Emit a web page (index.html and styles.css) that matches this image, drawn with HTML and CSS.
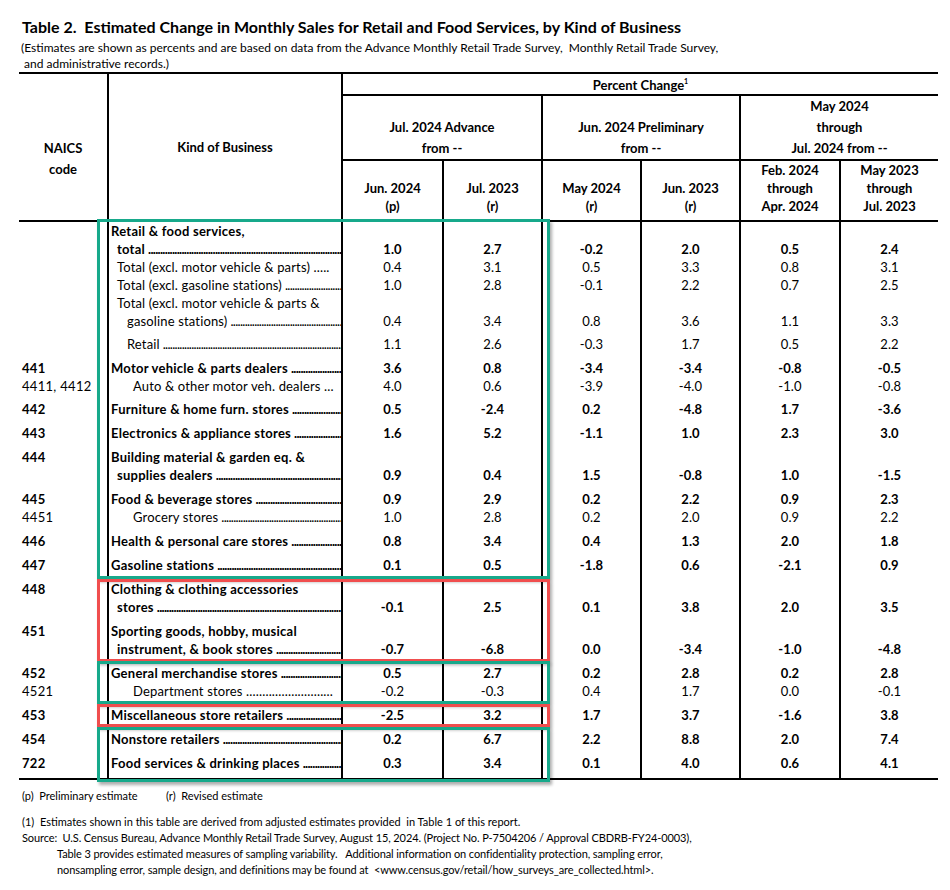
FILE: index.html
```html
<!DOCTYPE html>
<html lang="en">
<head>
<meta charset="utf-8">
<title>Table 2. Estimated Change in Monthly Sales</title>
<link rel="stylesheet" href="styles.css">
</head>
<body>
<div class="page">
  <h1 class="title">Table 2.&nbsp; Estimated Change in Monthly Sales for Retail and Food Services, by Kind of Business</h1>
  <p class="subtitle">(Estimates are shown as percents and are based on data from the Advance Monthly Retail Trade Survey,&nbsp; Monthly Retail Trade Survey,<br>&nbsp;and administrative records.)</p>

  <div class="table-wrap">
    <table class="data">
      <colgroup>
        <col class="c-naics"><col class="c-kind"><col class="c-v1"><col class="c-v2"><col class="c-v3"><col class="c-v4"><col class="c-v5"><col class="c-v6">
      </colgroup>
      <thead>
        <tr class="h1">
          <th rowspan="3" class="naics-h">NAICS<br>code</th>
          <th rowspan="3" class="kind-h">Kind of Business</th>
          <th colspan="6" class="pc">Percent Change<sup>1</sup></th>
        </tr>
        <tr class="h2">
          <th colspan="2">Jul. 2024 Advance<br>from --</th>
          <th colspan="2">Jun. 2024 Preliminary<br>from --</th>
          <th colspan="2">May 2024<br>through<br>Jul. 2024 from --</th>
        </tr>
        <tr class="h3">
          <th>Jun. 2024<br>(p)</th>
          <th>Jul. 2023<br>(r)</th>
          <th>May 2024<br>(r)</th>
          <th>Jun. 2023<br>(r)</th>
          <th>Feb. 2024<br>through<br>Apr. 2024</th>
          <th>May 2023<br>through<br>Jul. 2023</th>
        </tr>
      </thead>
      <tbody>
        <tr class="b"><td></td><td><div class="lbl">Retail &amp; food services,</div></td><td></td><td></td><td></td><td></td><td></td><td></td></tr>
        <tr class="b"><td></td><td><div class="lbl i1"><span>total</span><span class="dots"></span></div></td><td>1.0</td><td>2.7</td><td>-0.2</td><td>2.0</td><td>0.5</td><td>2.4</td></tr>
        <tr><td></td><td><div class="lbl i1">Total (excl. motor vehicle &amp; parts) .....</div></td><td>0.4</td><td>3.1</td><td>0.5</td><td>3.3</td><td>0.8</td><td>3.1</td></tr>
        <tr><td></td><td><div class="lbl i1"><span>Total (excl. gasoline stations)</span><span class="dots"></span></div></td><td>1.0</td><td>2.8</td><td>-0.1</td><td>2.2</td><td>0.7</td><td>2.5</td></tr>
        <tr><td></td><td><div class="lbl i1">Total (excl. motor vehicle &amp; parts &amp;</div></td><td></td><td></td><td></td><td></td><td></td><td></td></tr>
        <tr><td></td><td><div class="lbl i2"><span>gasoline stations)</span><span class="dots"></span></div></td><td>0.4</td><td>3.4</td><td>0.8</td><td>3.6</td><td>1.1</td><td>3.3</td></tr>
        <tr class="g5"><td></td><td><div class="lbl i2"><span>Retail</span><span class="dots"></span></div></td><td>1.1</td><td>2.6</td><td>-0.3</td><td>1.7</td><td>0.5</td><td>2.2</td></tr>

        <tr class="b g6"><td>441</td><td><div class="lbl"><span>Motor vehicle &amp; parts dealers</span><span class="dots"></span></div></td><td>3.6</td><td>0.8</td><td>-3.4</td><td>-3.4</td><td>-0.8</td><td>-0.5</td></tr>
        <tr><td>4411, 4412</td><td><div class="lbl i3">Auto &amp; other motor veh. dealers ...</div></td><td>4.0</td><td>0.6</td><td>-3.9</td><td>-4.0</td><td>-1.0</td><td>-0.8</td></tr>

        <tr class="b g5"><td>442</td><td><div class="lbl"><span>Furniture &amp; home furn. stores</span><span class="dots"></span></div></td><td>0.5</td><td>-2.4</td><td>0.2</td><td>-4.8</td><td>1.7</td><td>-3.6</td></tr>
        <tr class="b g6"><td>443</td><td><div class="lbl"><span>Electronics &amp; appliance stores</span><span class="dots"></span></div></td><td>1.6</td><td>5.2</td><td>-1.1</td><td>1.0</td><td>2.3</td><td>3.0</td></tr>
        <tr class="b g6"><td>444</td><td><div class="lbl">Building material &amp; garden eq. &amp;</div></td><td></td><td></td><td></td><td></td><td></td><td></td></tr>
        <tr class="b"><td></td><td><div class="lbl i1"><span>supplies dealers</span><span class="dots"></span></div></td><td>0.9</td><td>0.4</td><td>1.5</td><td>-0.8</td><td>1.0</td><td>-1.5</td></tr>
        <tr class="b g6"><td>445</td><td><div class="lbl"><span>Food &amp; beverage stores</span><span class="dots"></span></div></td><td>0.9</td><td>2.9</td><td>0.2</td><td>2.2</td><td>0.9</td><td>2.3</td></tr>
        <tr><td>4451</td><td><div class="lbl i3"><span>Grocery stores</span><span class="dots"></span></div></td><td>1.0</td><td>2.8</td><td>0.2</td><td>2.0</td><td>0.9</td><td>2.2</td></tr>
        <tr class="b g6"><td>446</td><td><div class="lbl"><span>Health &amp; personal care stores</span><span class="dots"></span></div></td><td>0.8</td><td>3.4</td><td>0.4</td><td>1.3</td><td>2.0</td><td>1.8</td></tr>
        <tr class="b g6"><td>447</td><td><div class="lbl"><span>Gasoline stations</span><span class="dots"></span></div></td><td>0.1</td><td>0.5</td><td>-1.8</td><td>0.6</td><td>-2.1</td><td>0.9</td></tr>
        <tr class="b g6"><td>448</td><td><div class="lbl">Clothing &amp; clothing accessories</div></td><td></td><td></td><td></td><td></td><td></td><td></td></tr>
        <tr class="b"><td></td><td><div class="lbl i1"><span>stores</span><span class="dots"></span></div></td><td>-0.1</td><td>2.5</td><td>0.1</td><td>3.8</td><td>2.0</td><td>3.5</td></tr>
        <tr class="b g6"><td>451</td><td><div class="lbl">Sporting goods, hobby, musical</div></td><td></td><td></td><td></td><td></td><td></td><td></td></tr>
        <tr class="b"><td></td><td><div class="lbl i1"><span>instrument, &amp; book stores</span><span class="dots"></span></div></td><td>-0.7</td><td>-6.8</td><td>0.0</td><td>-3.4</td><td>-1.0</td><td>-4.8</td></tr>
        <tr class="b g6"><td>452</td><td><div class="lbl"><span>General merchandise stores</span><span class="dots"></span></div></td><td>0.5</td><td>2.7</td><td>0.2</td><td>2.8</td><td>0.2</td><td>2.8</td></tr>
        <tr><td>4521</td><td><div class="lbl i3">Department stores ...........................</div></td><td>-0.2</td><td>-0.3</td><td>0.4</td><td>1.7</td><td>0.0</td><td>-0.1</td></tr>
        <tr class="b g6"><td>453</td><td><div class="lbl"><span>Miscellaneous store retailers</span><span class="dots"></span></div></td><td>-2.5</td><td>3.2</td><td>1.7</td><td>3.7</td><td>-1.6</td><td>3.8</td></tr>
        <tr class="b g6"><td>454</td><td><div class="lbl"><span>Nonstore retailers</span><span class="dots"></span></div></td><td>0.2</td><td>6.7</td><td>2.2</td><td>8.8</td><td>2.0</td><td>7.4</td></tr>
        <tr class="b g6 last"><td>722</td><td><div class="lbl"><span>Food services &amp; drinking places</span><span class="dots"></span></div></td><td>0.3</td><td>3.4</td><td>0.1</td><td>4.0</td><td>0.6</td><td>4.1</td></tr>
      </tbody>
    </table>

    <div class="mark green m1"></div>
    <div class="mark red m2"></div>
    <div class="mark green m3"></div>
    <div class="mark red m4"></div>
    <div class="mark green m5"></div>
  </div>

  <div class="notes">
    <p class="legend"><span class="leg-p">(p)&nbsp; Preliminary estimate</span><span>(r)&nbsp; Revised estimate</span></p>
    <p class="fn">(1)&nbsp; Estimates shown in this table are derived from adjusted estimates provided&nbsp; in Table 1 of this report.</p>
    <p class="source">Source:&nbsp; U.S. Census Bureau, Advance Monthly Retail Trade Survey, August 15, 2024. (Project No. P-7504206 / Approval CBDRB-FY24-0003),<br>Table 3 provides estimated measures of sampling variability.&nbsp;&nbsp; Additional information on confidentiality protection, sampling error,<br>nonsampling error, sample design, and definitions may be found at&nbsp; &lt;www.census.gov/retail/how_surveys_are_collected.html&gt;.</p>
  </div>
</div>
</body>
</html>
```

FILE: styles.css
```css
html, body {
  margin: 0;
  padding: 0;
  background: #ffffff;
}

body {
  font-family: Lato, "Open Sans", "Liberation Sans", sans-serif;
  color: #000000;
}

.page {
  padding: 16px 0 0 19px;
  width: 919px;
}

.title {
  margin: 0 0 2px 3px;
  font-size: 16px;
  line-height: 22px;
  font-weight: 700;
  white-space: nowrap;
}

.subtitle {
  margin: 0 0 0 2px;
  font-size: 12px;
  line-height: 16px;
  white-space: nowrap;
}

.table-wrap {
  position: relative;
}

.data {
  width: 919px;
  table-layout: fixed;
  border-collapse: collapse;
  font-size: 13px;
  letter-spacing: 0.15px;
}

.c-naics { width: 89px; }
.c-kind { width: 234px; }
.c-v1 { width: 101px; }
.c-v2 { width: 99px; }
.c-v3 { width: 99px; }
.c-v4 { width: 99px; }
.c-v5 { width: 100px; }
.c-v6 { width: 98px; }

.data th {
  font-weight: 700;
  text-align: center;
  padding: 0;
  border-left: 2px solid #000;
  letter-spacing: 0;
}

.data thead tr.h1 th {
  border-top: 2px solid #000;
}

.data th.naics-h {
  border-left: none;
  border-bottom: 2px solid #000;
  vertical-align: middle;
  padding-top: 24px;
  line-height: 21px;
}

.data th.kind-h {
  border-bottom: 2px solid #000;
  vertical-align: middle;
  line-height: 18px;
}

.data th.pc {
  height: 17px;
  padding-top: 2px;
  line-height: 18px;
  border-bottom: 2px solid #000;
  vertical-align: middle;
}

.data th.pc sup {
  font-size: 7px;
  vertical-align: 6px;
  line-height: 0;
}

.data tr.h2 th {
  height: 62px;
  line-height: 21px;
  vertical-align: bottom;
  border-bottom: 2px solid #000;
}

.data tr.h3 th {
  height: 54px;
  line-height: 18px;
  padding-bottom: 5px;
  vertical-align: bottom;
  border-bottom: 2px solid #000;
}

.data tr.h2 th:first-child {
  border-left: 2px solid #000;
}

.data td {
  padding: 0;
  height: 18px;
  line-height: 18px;
  text-align: center;
  vertical-align: bottom;
  border-left: 2px solid #000;
  white-space: nowrap;
}

.data td:first-child {
  border-left: none;
  text-align: left;
  padding-left: 3px;
  letter-spacing: 0.3px;
}

.data td:nth-child(2) {
  text-align: left;
  padding-left: 2px;
}

.data tr.b td {
  font-weight: 700;
}

.data tr.b td:nth-child(2) {
  letter-spacing: 0.25px;
}

.data tr.g4 td { padding-top: 4px; }
.data tr.g5 td { padding-top: 5px; }
.data tr.g6 td { padding-top: 6px; }
.data tr.last td { padding-bottom: 6px; border-bottom: 2px solid #000; }

.lbl {
  display: flex;
  overflow: hidden;
  white-space: nowrap;
}

.lbl.i1 { padding-left: 6px; }
.lbl.i2 { padding-left: 16px; }
.lbl.i3 { padding-left: 22px; }

.lbl .dots {
  flex: 1 1 auto;
  overflow: hidden;
  padding-left: 3px;
  letter-spacing: -0.7px;
}

.lbl .dots::after {
  content: "....................................................................................................................................................";
}

.mark {
  position: absolute;
  left: 78px;
  width: 453px;
  box-sizing: border-box;
  border: 3px solid;
  box-shadow: 2px 3px 3px rgba(0, 0, 0, 0.32);
  pointer-events: none;
}

.mark.green { border-color: #17a98b; }
.mark.red { border-color: #f04e4e; }

.m1 { top: 147px; height: 360px; }
.m2 { top: 507px; height: 83px; }
.m3 { top: 589px; height: 43px; }
.m4 { top: 632px; height: 23px; }
.m5 { top: 655px; height: 55px; }

.notes {
  margin: 0 0 0 3px;
  font-size: 11px;
  line-height: 16px;
}

.notes p {
  margin: 0;
  white-space: nowrap;
}

.legend {
  padding-top: 8px;
  display: flex;
}

.leg-p {
  width: 144px;
}

.fn {
  margin-top: 10px !important;
}

.source {
  padding-left: 35px;
  text-indent: -35px;
  letter-spacing: -0.1px;
}
```
